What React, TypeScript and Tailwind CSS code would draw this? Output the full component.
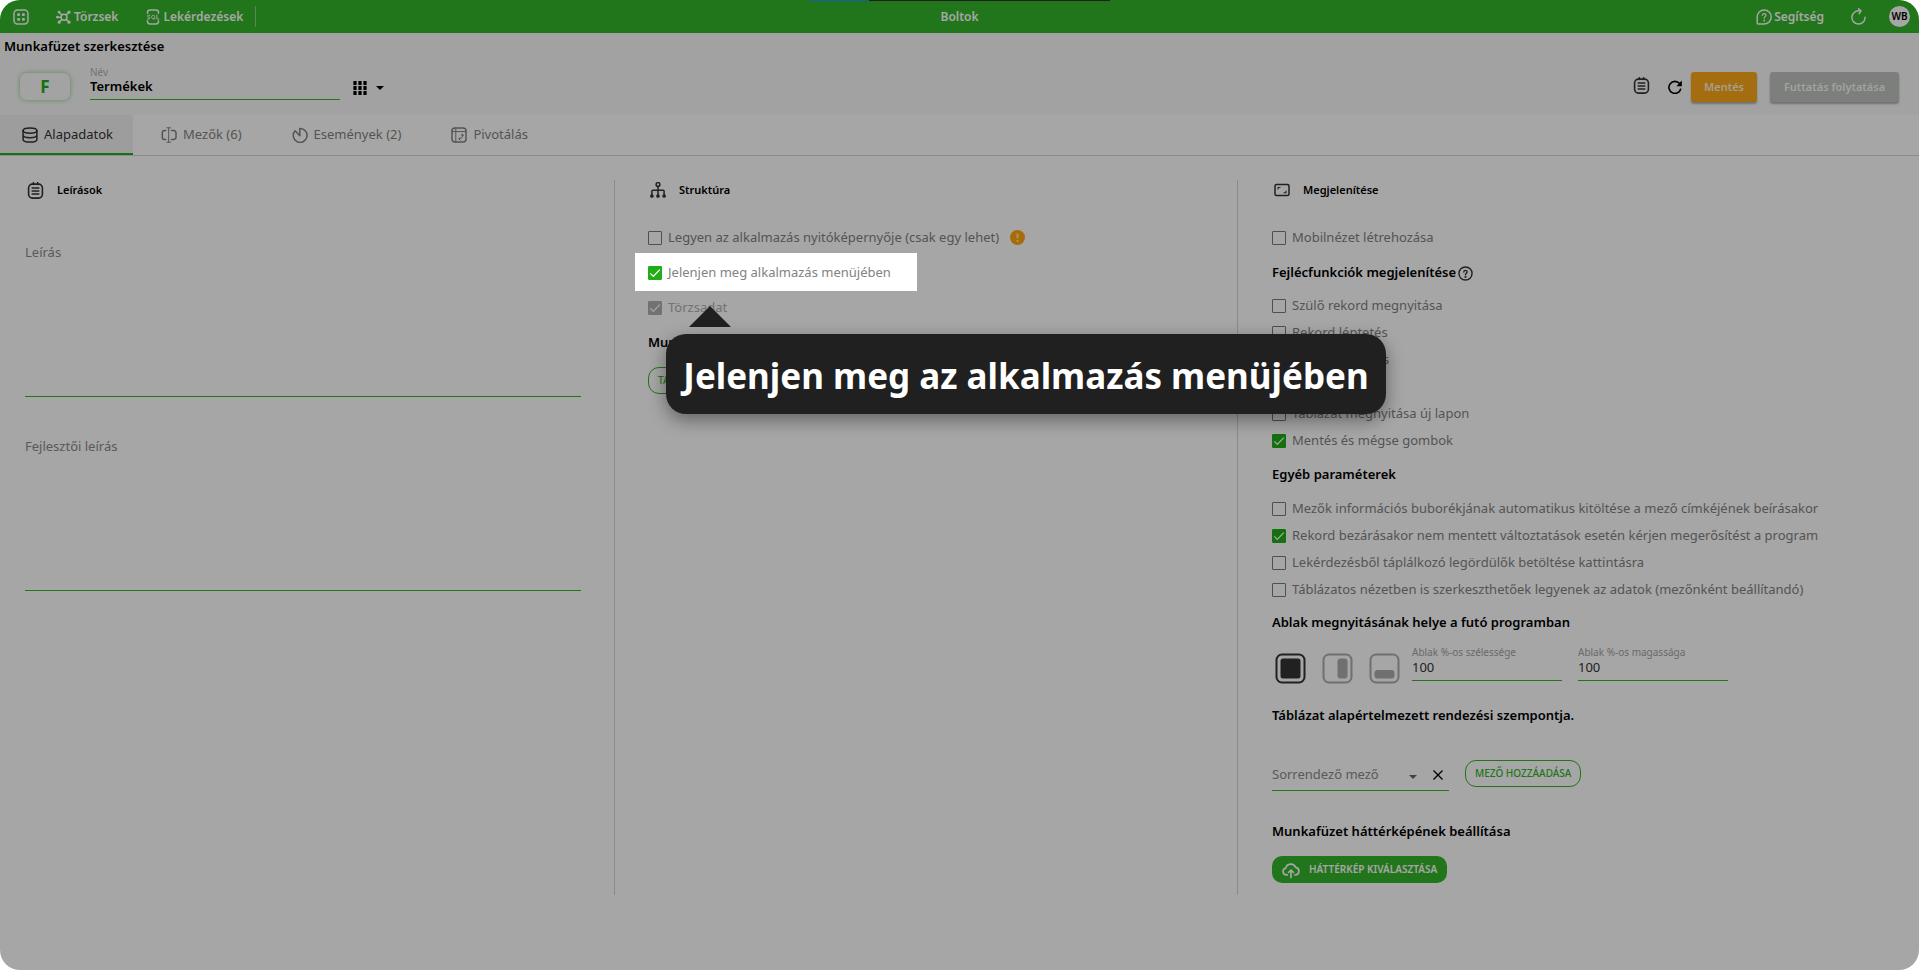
import type { ReactNode } from 'react';

type IconProps = { className?: string };

function Svg({ className = '', box = 16, children }: { className?: string; box?: number; children: ReactNode }) {
  return (
    <svg
      className={`shrink-0 ${className}`}
      viewBox={`0 0 ${box} ${box}`}
      fill="none"
      stroke="currentColor"
      strokeWidth="1.5"
      strokeLinecap="round"
      strokeLinejoin="round"
      aria-hidden="true"
    >
      {children}
    </svg>
  );
}

const AppsIcon = ({ className }: IconProps) => (
  <Svg className={className}>
    <rect x="1" y="1" width="14" height="14" rx="3.5" />
    {[5.6, 10.4].map((y) =>
      [5.6, 10.4].map((x) => (
        <rect key={`${x}-${y}`} x={x - 1.4} y={y - 1.4} width="2.8" height="2.8" rx="0.8" fill="currentColor" stroke="none" />
      )),
    )}
  </Svg>
);

const NodesIcon = ({ className }: IconProps) => (
  <Svg className={className}>
    <circle cx="8" cy="8.2" r="3" />
    <path d="M5.8 6.1 3.4 3.6M10.2 6.1l2.4-2.5M5.8 10.4l-2.3 2.4M10.2 10.4l2.4 2.4M5 8.2H1.6" />
    <circle cx="3" cy="3.2" r="0.6" fill="currentColor" />
    <circle cx="13" cy="3.2" r="0.9" fill="currentColor" />
    <circle cx="3.2" cy="13.2" r="0.9" fill="currentColor" />
    <circle cx="13" cy="13.2" r="0.9" fill="currentColor" />
    <circle cx="1.4" cy="8.2" r="0.6" fill="currentColor" />
  </Svg>
);

const SqlIcon = ({ className }: IconProps) => (
  <Svg className={className}>
    <path d="M2.5 4.2V3.4C2.5 2 3.5 1 5 1h6c1.500 0 2.500 1 2.500 2.400v.8M2.500 11.800v.8C2.500 14 3.500 15 5 15h6c1.500 0 2.500-1 2.500-2.400v-.8" />
    <path
      strokeWidth="1"
      d="M4.900 6.200H3.400c-1.300 0-1.300 1.800 0 1.800h.6c1.300 0 1.300 1.900 0 1.900H2.400M6.700 7.400c0-1.600 2.900-1.600 2.900 0v1.300c0 1.600-2.900 1.600-2.900 0zM8.800 9.300l1 1M11.800 6.200v3.700h2"
    />
  </Svg>
);

const HelpBubbleIcon = ({ className }: IconProps) => (
  <Svg className={className}>
    <path d="M8.200 1A6.800 6.800 0 1 1 8.200 15H2.200c-.7 0-1-.4-1-1V8A7 7 0 0 1 8.200 1z" />
    <path strokeWidth="1.300" d="M6.400 6.300c.1-2.300 3.600-2.200 3.500 0 0 1.300-1.700 1.400-1.700 2.900" />
    <circle cx="8.200" cy="11.600" r="0.300" fill="currentColor" />
  </Svg>
);

const ReloadIcon = ({ className }: IconProps) => (
  <Svg className={className}>
    <path strokeWidth="1.400" d="M10.200 2.700H8.200A6.200 6.200 0 1 0 14.200 8.600M8 .7 10.400 2.700 8.600 5.400" />
  </Svg>
);

const ClipboardIcon = ({ className }: IconProps) => (
  <Svg className={className}>
    <rect x="1.500" y="2" width="13" height="13.200" rx="3.600" />
    <path d="M6 .7V2.400M10 .7V2.400M4.900 5.700h6.200M4.900 8.500h6.200M4.900 11.300h6.200" />
  </Svg>
);

const RefreshIcon = ({ className }: IconProps) => (
  <svg className={`shrink-0 ${className}`} viewBox="0 0 14 14" fill="none" stroke="currentColor" strokeWidth="1.600" aria-hidden="true">
    <path d="M11.600 3.600A6 6 0 1 0 12.800 8.600" />
    <path d="M13.800.6v5.600H8.400z" fill="currentColor" stroke="none" />
  </svg>
);

const GridIcon = ({ className }: IconProps) => (
  <svg className={`shrink-0 ${className}`} viewBox="0 0 14 14" fill="currentColor" aria-hidden="true">
    {[0, 5, 10].map((y) => [0, 5, 10].map((x) => <rect key={`${x}-${y}`} x={x + 0.4} y={y} width="3.2" height="4" />))}
  </svg>
);

const CaretIcon = ({ className }: IconProps) => (
  <svg className={`shrink-0 ${className}`} viewBox="0 0 8 4" fill="currentColor" aria-hidden="true">
    <path d="M0 0h8L4 4z" />
  </svg>
);

const DatabaseIcon = ({ className }: IconProps) => (
  <Svg className={className}>
    <ellipse cx="8" cy="3.600" rx="6.900" ry="2.700" />
    <path d="M1.100 3.600v8.800c0 3.500 13.800 3.500 13.800 0V3.600M1.100 8c0 3.600 13.800 3.600 13.800 0" />
  </Svg>
);

const FieldIcon = ({ className }: IconProps) => (
  <Svg className={className}>
    <path d="M4.800 3.500H3.600A2.300 2.300 0 0 0 1.300 5.800v4.400a2.300 2.300 0 0 0 2.300 2.300h1.200M10.500 3.500h2.200a2.300 2.300 0 0 1 2.300 2.300v4.400a2.300 2.300 0 0 1-2.300 2.300h-2.200" />
    <path strokeWidth="1" d="M7.700 1v14M5.900.8h3.600M5.900 15.200h3.600" />
  </Svg>
);

const EventIcon = ({ className }: IconProps) => (
  <Svg className={className}>
    <path d="M7.600 8.600V1.400A6.900 6.900 0 1 1 2.900 3.600z" transform="translate(.2 .2)" />
  </Svg>
);

const PivotIcon = ({ className }: IconProps) => (
  <Svg className={className}>
    <rect x="1" y="1" width="14" height="14" rx="3" />
    <path strokeWidth="1" d="M1 4.600h14M4.800 1v14" />
    <path strokeWidth="1" d="M11.300 7.300c1 2.800-.6 4.600-3.300 4.500M10 8.400l1.300-1.200 1.300 1.200M9.100 10.500l-1.300 1.300 1.300 1.300" />
  </Svg>
);

const TreeIcon = ({ className }: IconProps) => (
  <Svg className={className}>
    <circle cx="8" cy="2.500" r="1.900" />
    <path d="M8 4.600v8.600M1.900 13V9.200c0-.6.300-.9.900-.9h10.400c.6 0 .9.300.9.900V13" />
    <circle cx="1.900" cy="14" r="1.100" fill="currentColor" />
    <circle cx="8" cy="14" r="1.100" fill="currentColor" />
    <circle cx="14.100" cy="14" r="1.100" fill="currentColor" />
  </Svg>
);

const ScreenIcon = ({ className }: IconProps) => (
  <Svg className={className}>
    <rect x="1" y="2.500" width="14" height="11" rx="1.500" />
    <path strokeWidth="1.100" d="M4 7V5.500h2M12 9v1.700h-2" />
  </Svg>
);

const QuestionIcon = ({ className }: IconProps) => (
  <Svg className={className}>
    <circle cx="8" cy="8" r="7" />
    <path d="M6.200 6.400c.1-2.300 3.600-2.200 3.500 0 0 1.300-1.700 1.400-1.700 2.800" />
    <circle cx="8" cy="11.600" r="0.400" fill="currentColor" />
  </Svg>
);

const WarningIcon = ({ className }: IconProps) => (
  <svg className={`shrink-0 ${className}`} viewBox="0 0 16 16" aria-hidden="true">
    <circle cx="8" cy="8" r="8" fill="#ffa60d" />
    <path d="M8 3.600v5.200M8 10.600v2" stroke="#ffe9c4" strokeWidth="1.900" />
  </svg>
);

const CloudUploadIcon = ({ className }: IconProps) => (
  <Svg className={className}>
    <path d="M4.800 12.400H4A3.100 3.100 0 0 1 3.300 6.300 4.700 4.700 0 0 1 12.200 5.700 3.400 3.400 0 0 1 12.200 12.400h-.7" />
    <path d="M8 14.700V8.200M5.800 10.200 8 8l2.200 2.200" />
  </Svg>
);

const CloseIcon = ({ className }: IconProps) => (
  <svg className={`shrink-0 ${className}`} viewBox="0 0 10 10" stroke="currentColor" strokeWidth="1.300" aria-hidden="true">
    <path d="M.5.5l9 9M9.500.5l-9 9" />
  </svg>
);

function Checkbox({ id, label, checked = false, disabled = false, tall = false }: {
  id: string;
  label: string;
  checked?: boolean;
  disabled?: boolean;
  tall?: boolean;
}) {
  return (
    <div className={`flex w-fit items-center gap-[6px] ${tall ? 'h-[35px]' : 'h-[27px]'}`}>
      <span className="grid h-[14px] w-[14px] shrink-0">
        <input
          id={id}
          type="checkbox"
          defaultChecked={checked}
          disabled={disabled}
          className="col-start-1 row-start-1 h-[14px] w-[14px] appearance-none rounded-[1px] border border-[#7a7a7a] peer checked:border-[#22ac18] checked:bg-[#22ac18] disabled:border-[#b0b0b0] disabled:bg-[#b0b0b0]"
        />
        <svg
          viewBox="0 0 14 14"
          className="pointer-events-none invisible col-start-1 row-start-1 peer-checked:visible"
          fill="none"
          stroke="#ffffff"
          strokeWidth="1.300"
          aria-hidden="true"
        >
          <path d="M2.300 7.400 5.300 10.400 11.800 3.600" />
        </svg>
      </span>
      <label htmlFor={id} className={`whitespace-nowrap ${disabled ? 'text-[#b0b0b0]' : 'text-[#828282]'}`}>
        {label}
      </label>
    </div>
  );
}

function SectionTitle({ icon, children }: { icon: ReactNode; children: ReactNode }) {
  return (
    <h2 className="flex h-5 items-center gap-[13px] pl-[2px] text-[11px] font-semibold text-black">
      <span className="text-[#333333]">{icon}</span>
      {children}
    </h2>
  );
}

function Heading({ className = '', children }: { className?: string; children: ReactNode }) {
  return <h3 className={`flex h-5 items-center gap-[2px] font-semibold text-black ${className}`}>{children}</h3>;
}

function SizeField({ id, label }: { id: string; label: string }) {
  return (
    <div className="flex w-[150px] flex-col">
      <label htmlFor={id} className="text-[10px] leading-3 whitespace-nowrap text-[#a3a3a3]">{label}</label>
      <input id={id} type="text" defaultValue="100" className="h-[23px] w-full border-b border-[#33b428] pb-1 text-[#333333] outline-none" />
    </div>
  );
}

function LongField({ id, label }: { id: string; label: string }) {
  return (
    <div className="flex flex-col">
      <label htmlFor={id} className="h-5 leading-5 text-[#8a8a8a]">{label}</label>
      <textarea id={id} className="h-[135px] w-full resize-none border-b border-[#33b428] outline-none" />
    </div>
  );
}

const tabs = [
  { name: 'Mezők (6)', icon: <FieldIcon className="h-4 w-4" /> },
  { name: 'Események (2)', icon: <EventIcon className="h-4 w-4" /> },
  { name: 'Pivotálás', icon: <PivotIcon className="h-4 w-4" /> },
];

function TopBar() {
  return (
    <header className="grid h-[33px] grid-cols-[1fr_auto_1fr] items-center bg-[#33b428] text-[12px] font-semibold text-white">
      <nav className="flex items-center pl-[13px]">
        <button type="button" aria-label="Alkalmazások"><AppsIcon className="h-4 w-4" /></button>
        <a href="#torzsek" className="ml-[27px] flex items-center gap-[2px]">
          <NodesIcon className="h-4 w-4" />Törzsek
        </a>
        <a href="#lekerdezesek" className="ml-[27px] flex items-center gap-[2px]">
          <SqlIcon className="h-4 w-4" />Lekérdezések
        </a>
        <span className="ml-3 h-[21px] w-px bg-white/40" />
      </nav>
      <h1>Boltok</h1>
      <div className="flex items-center justify-end pr-[9px]">
        <a href="#segitseg" className="flex items-center gap-[2px]">
          <HelpBubbleIcon className="h-4 w-4" />Segítség
        </a>
        <button type="button" aria-label="Újratöltés" className="ml-[26px]"><ReloadIcon className="h-[17px] w-[17px]" /></button>
        <button type="button" className="ml-[22px] grid h-[21px] w-[21px] place-items-center rounded-full bg-white text-[10px] font-semibold text-black">WB</button>
      </div>
    </header>
  );
}

function Toolbar() {
  return (
    <div className="bg-[#f9f9f9] pt-[3px] pb-[13px]">
      <h2 className="pl-[4px] leading-5 font-semibold text-black">Munkafüzet szerkesztése</h2>
      <div className="mt-[10px] flex items-end pr-5 pl-5">
        <button type="button" className="mb-[2px] h-[27px] w-[50px] rounded-[7px] bg-[#fbfbfb] text-[17px] leading-none font-bold text-[#22ac18] shadow-[0_0_5px_#8fd489]">F</button>
        <div className="mb-[2px] ml-5 flex w-[250px] flex-col">
          <label htmlFor="nev" className="text-[10px] leading-3 text-[#b0b0b0]">Név</label>
          <input id="nev" type="text" defaultValue="Termékek" className="h-[22px] w-full border-b border-[#33b428] pb-[6px] font-semibold text-black outline-none" />
        </div>
        <button type="button" aria-label="Nézet" className="mb-[7px] ml-[13px] flex items-center gap-[9px] text-black">
          <GridIcon className="h-[14px] w-[14px]" />
          <CaretIcon className="h-1 w-2" />
        </button>
        <div className="ml-auto flex items-center">
          <button type="button" aria-label="Leírás" className="mb-1 text-[#333333]"><ClipboardIcon className="h-[17px] w-[17px]" /></button>
          <button type="button" aria-label="Frissítés" className="ml-[18px] text-black"><RefreshIcon className="h-[14px] w-[14px]" /></button>
          <button type="button" className="ml-[9px] h-[30px] w-[66px] rounded-[3px] bg-[#fba81a] text-[11px] font-semibold text-[#fff3dc] shadow-[0_2px_2px_rgba(0,0,0,0.3)]">Mentés</button>
          <button type="button" className="ml-[13px] h-[30px] w-[129px] rounded-[3px] bg-[#bfc3bd] text-[11px] font-semibold text-[#f8f8f8] shadow-[0_2px_2px_rgba(0,0,0,0.3)]">Futtatás folytatása</button>
        </div>
      </div>
    </div>
  );
}

function Tour() {
  return (
    <>
      <div className="pointer-events-none absolute -top-[2px] -right-[26px] -left-[13px] h-[38px] shadow-[0_0_0_4000px_rgba(0,0,0,0.35)]" />
      <svg className="absolute top-[51px] left-[41px] h-[21px] w-[42px]" viewBox="0 0 42 21" fill="#202020" aria-hidden="true">
        <path d="M21 0 42 21H0z" />
      </svg>
      <div role="tooltip" className="absolute top-[79px] left-[18px] flex h-20 w-[720px] items-center justify-center rounded-[20px] bg-[#202020] pt-1 text-[35px] font-bold whitespace-nowrap text-white shadow-[0_6px_18px_rgba(0,0,0,0.4)]">
        Jelenjen meg az alkalmazás menüjében
      </div>
    </>
  );
}

export default function App() {
  return (
    <div className="relative min-h-screen overflow-hidden rounded-[20px] bg-white font-['Noto_Sans',sans-serif] text-[13px]">
      <TopBar />
      <Toolbar />
      <div role="tablist" className="flex h-[41px] border-b border-[#d6d6d6]">
        <button type="button" role="tab" aria-selected="true" className="flex items-center gap-[6px] border-b-2 border-[#22ac18] bg-[#f2f2f2] pt-[2px] pr-5 pl-[22px] text-[#333333]">
          <DatabaseIcon className="h-4 w-4" />Alapadatok
        </button>
        {tabs.map((tab) => (
          <button key={tab.name} type="button" role="tab" aria-selected="false" className="flex items-center gap-[6px] pr-[22px] pl-7 text-[#828282]">
            {tab.icon}
            {tab.name}
          </button>
        ))}
      </div>

      <main className="grid grid-cols-[614fr_623fr_682fr] pt-6">
        <section className="pr-[33px] pl-[25px]">
          <SectionTitle icon={<ClipboardIcon className="h-[17px] w-[17px]" />}>Leírások</SectionTitle>
          <div className="mt-[42px] flex flex-col gap-[39px]">
            <LongField id="leiras" label="Leírás" />
            <LongField id="fejlesztoi" label="Fejlesztői leírás" />
          </div>
        </section>

        <section className="border-l border-[#d6d6d6] pl-[33px]">
          <SectionTitle icon={<TreeIcon className="h-4 w-4" />}>Struktúra</SectionTitle>
          <div className="mt-5 flex items-center gap-[11px]">
            <Checkbox tall id="nyito" label="Legyen az alkalmazás nyitóképernyője (csak egy lehet)" />
            <WarningIcon className="h-[15px] w-[15px]" />
          </div>
          <div className="relative z-10 w-fit">
            <Checkbox tall id="menu" label="Jelenjen meg alkalmazás menüjében" checked />
            <Tour />
          </div>
          <Checkbox tall id="torzsadat" label="Törzsadat" checked disabled />
          <Heading className="mt-2">Munkafüzet táblája</Heading>
          <button type="button" className="mt-[14px] h-[27px] rounded-[11px] border border-[#33b428] px-[9px] text-[10px] font-medium text-[#33b428]">TALLÓZÁS</button>
        </section>

        <section className="border-l border-[#d6d6d6] pb-3 pl-[34px]">
          <SectionTitle icon={<ScreenIcon className="h-4 w-4" />}>Megjelenítése</SectionTitle>
          <div className="mt-6">
            <Checkbox id="mobil" label="Mobilnézet létrehozása" />
          </div>
          <Heading className="mt-3">
            Fejlécfunkciók megjelenítése
            <QuestionIcon className="h-[15px] w-[15px] text-[#333333]" />
          </Heading>
          <div className="mt-[9px]">
            <Checkbox id="szulo" label="Szülő rekord megnyitása" />
            <Checkbox id="leptetes" label="Rekord léptetés" />
            <Checkbox id="masolas" label="Rekord másolás" />
            <Checkbox id="uj" label="Új rekord" />
            <Checkbox id="ujlap" label="Táblázat megnyitása új lapon" />
            <Checkbox id="mentes" label="Mentés és mégse gombok" checked />
          </div>
          <Heading className="mt-[11px]">Egyéb paraméterek</Heading>
          <div className="mt-[10px]">
            <Checkbox id="buborek" label="Mezők információs buborékjának automatikus kitöltése a mező címkéjének beírásakor" />
            <Checkbox id="megerosites" label="Rekord bezárásakor nem mentett változtatások esetén kérjen megerősítést a program" checked />
            <Checkbox id="legordulo" label="Lekérdezésből táplálkozó legördülők betöltése kattintásra" />
            <Checkbox id="tablazatos" label="Táblázatos nézetben is szerkeszthetőek legyenek az adatok (mezőnként beállítandó)" />
          </div>
          <Heading className="mt-[10px]">Ablak megnyitásának helye a futó programban</Heading>
          <div className="mt-[13px] flex items-start pl-[3px]">
            <div className="flex gap-4 pt-[7px]">
              <button type="button" aria-label="Teljes ablak" className="text-[#333333]">
                <Svg box={31} className="h-[31px] w-[31px]">
                  <rect x="1.500" y="1.500" width="28" height="28" rx="5.500" strokeWidth="2" />
                  <rect x="5.500" y="5.500" width="20" height="20" rx="2.500" fill="currentColor" stroke="none" />
                </Svg>
              </button>
              <button type="button" aria-label="Jobb oldalon" className="text-[#acacac]">
                <Svg box={31} className="h-[31px] w-[31px]">
                  <rect x="1.500" y="1.500" width="28" height="28" rx="5.500" strokeWidth="2" />
                  <rect x="15.500" y="5.500" width="10" height="20" rx="3" fill="currentColor" stroke="none" />
                </Svg>
              </button>
              <button type="button" aria-label="Alul" className="text-[#acacac]">
                <Svg box={31} className="h-[31px] w-[31px]">
                  <rect x="1.500" y="1.500" width="28" height="28" rx="5.500" strokeWidth="2" />
                  <rect x="5.500" y="17" width="20" height="8.500" rx="3" fill="currentColor" stroke="none" />
                </Svg>
              </button>
            </div>
            <div className="ml-3 flex gap-4">
              <SizeField id="szelesseg" label="Ablak %-os szélessége" />
              <SizeField id="magassag" label="Ablak %-os magassága" />
            </div>
          </div>
          <Heading className="mt-[22px]">Táblázat alapértelmezett rendezési szempontja.</Heading>
          <div className="mt-[34px] flex items-start gap-4">
            <div className="flex h-[31px] w-[177px] items-center border-b border-[#33b428] pr-[6px]">
              <select aria-label="Sorrendező mező" className="h-full flex-1 appearance-none text-[#8a8a8a] outline-none">
                <option>Sorrendező mező</option>
              </select>
              <CaretIcon className="mt-1 mr-4 h-1 w-2 text-[#666666]" />
              <button type="button" aria-label="Törlés" className="text-black"><CloseIcon className="h-[10px] w-[10px]" /></button>
            </div>
            <button type="button" className="h-[27px] rounded-[11px] border border-[#33b428] px-[9px] text-[10px] font-medium text-[#33b428]">MEZŐ HOZZÁADÁSA</button>
          </div>
          <Heading className="mt-[31px]">Munkafüzet háttérképének beállítása</Heading>
          <button type="button" className="mt-[14px] flex h-[27px] items-center gap-[9px] rounded-[10px] bg-[#33b428] pr-[10px] pl-[10px] text-[10px] font-semibold text-white">
            <CloudUploadIcon className="h-[18px] w-[18px]" />HÁTTÉRKÉP KIVÁLASZTÁSA
          </button>
        </section>
      </main>

      <div className="absolute top-0 left-[809px] z-20 flex h-px w-[301px] bg-[#202020]">
        <span className="w-[60px] bg-[#14609c]" />
      </div>
    </div>
  );
}
